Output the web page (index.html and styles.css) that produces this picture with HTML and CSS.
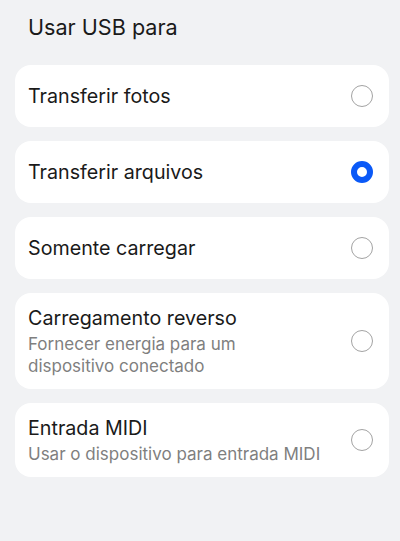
FILE: index.html
```html
<!DOCTYPE html>
<html lang="pt-BR">
<head>
<meta charset="utf-8">
<title>Usar USB para</title>
<link rel="stylesheet" href="styles.css">
</head>
<body>
<main class="screen">
  <h1 class="heading">Usar USB para</h1>
  <ul class="options">
    <li class="card">
      <div class="text"><div class="label">Transferir fotos</div></div>
      <span class="radio"></span>
    </li>
    <li class="card">
      <div class="text"><div class="label">Transferir arquivos</div></div>
      <span class="radio checked"></span>
    </li>
    <li class="card">
      <div class="text"><div class="label">Somente carregar</div></div>
      <span class="radio"></span>
    </li>
    <li class="card multi">
      <div class="text">
        <div class="label">Carregamento reverso</div>
        <div class="sub">Fornecer energia para um<br>dispositivo conectado</div>
      </div>
      <span class="radio"></span>
    </li>
    <li class="card multi">
      <div class="text">
        <div class="label">Entrada MIDI</div>
        <div class="sub">Usar o dispositivo para entrada MIDI</div>
      </div>
      <span class="radio"></span>
    </li>
  </ul>
</main>
</body>
</html>
```

FILE: styles.css
```css
html, body {
  margin: 0;
  padding: 0;
  background: #f1f2f4;
}
body {
  font-family: Inter, "Noto Sans", Roboto, sans-serif;
  color: #1a1a1a;
  width: 400px;
  height: 541px;
  overflow: hidden;
}
.screen {
  padding: 13px 11px 0 15px;
}
.heading {
  margin: 0 0 24px 13px;
  font-size: 21.6px;
  line-height: 28px;
  font-weight: 400;
  color: #1a1a1a;
}
.options {
  list-style: none;
  margin: 0;
  padding: 0;
  display: flex;
  flex-direction: column;
  gap: 14px;
}
.card {
  background: #ffffff;
  border-radius: 16px;
  min-height: 62px;
  box-sizing: border-box;
  padding: 12px 16px 12px 13px;
  display: flex;
  align-items: center;
  gap: 12px;
}
.text {
  flex: 1;
  min-width: 0;
}
.label {
  font-size: 19.7px;
  line-height: 26px;
  color: #1a1a1a;
}
.sub {
  margin-top: 2px;
  font-size: 17px;
  line-height: 22px;
  color: #7f7f7f;
}
.radio {
  width: 22px;
  height: 22px;
  box-sizing: border-box;
  border: 1.4px solid #a3a3a3;
  border-radius: 50%;
  flex: none;
}
.radio.checked {
  border: 6px solid #0a59f7;
}
```
